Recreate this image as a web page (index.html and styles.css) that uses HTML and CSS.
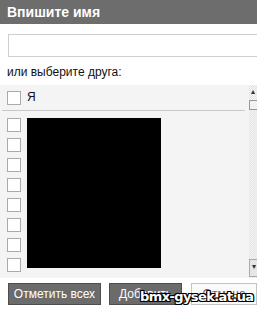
FILE: index.html
```html
<!DOCTYPE html>
<html lang="ru">
<head>
    <meta charset="UTF-8">
    <title>Впишите имя</title>
    <link rel="stylesheet" href="styles.css">
</head>
<body>
    <div class="dialog">
        <div class="title">Впишите имя</div>
        <div class="search">
            <input type="text" class="search-input">
        </div>
        <div class="hint">или выберите друга:</div>
        <div class="list">
            <div class="list-body">
                <div class="me-row">
                    <span class="check"></span>
                    <span class="me-name">Я</span>
                </div>
                <div class="friends">
                    <div class="checks">
                        <span class="check"></span>
                        <span class="check"></span>
                        <span class="check"></span>
                        <span class="check"></span>
                        <span class="check"></span>
                        <span class="check"></span>
                        <span class="check"></span>
                        <span class="check"></span>
                    </div>
                    <div class="names"></div>
                </div>
            </div>
            <div class="scrollbar">
                <div class="arrow">&#9652;</div>
                <div class="thumb"></div>
                <div class="track"></div>
                <div class="arrow arrow-down">&#9662;</div>
            </div>
        </div>
        <div class="buttons">
            <button class="btn btn-all">Отметить всех</button>
            <button class="btn btn-add">Добавить</button>
            <button class="btn btn-cancel">Отмена</button>
        </div>
        <div class="watermark">bmx-gysek.at.ua</div>
    </div>
</body>
</html>
```

FILE: styles.css
```css
body {
    margin: 0;
    background: #fff;
    font-family: "Liberation Sans", Arial, sans-serif;
    font-size: 12px;
    color: #111;
    overflow: hidden;
}
.dialog {
    position: relative;
    width: 257px;
    height: 309px;
    overflow: hidden;
}
.title {
    height: 24px;
    line-height: 24px;
    background-color: #6d6d6d;
    color: #fff;
    font-size: 14px;
    font-weight: bold;
    padding-left: 7px;
}
.search {
    padding: 10px 0 0 8px;
}
.search-input {
    display: block;
    box-sizing: border-box;
    width: 260px;
    height: 23px;
    margin: 0;
    border: 1px solid #cfcfcf;
    background: #fff;
}
.hint {
    padding: 8px 0 0 7px;
    height: 20px;
    line-height: 14px;
}
.list {
    display: flex;
    height: 193px;
    background-color: #f4f4f4;
}
.list-body {
    flex: 1;
}
.me-row {
    display: flex;
    align-items: center;
    gap: 6px;
    height: 25px;
    margin: 0 4px 0 2px;
    padding: 0 0 0 5px;
    border-bottom: 1px solid #c8c8c8;
}
.me-name {
    font-size: 12px;
    margin-top: -2px;
}
.check {
    display: block;
    box-sizing: border-box;
    width: 14px;
    height: 14px;
    border: 1px solid #aaa;
    background: #fff;
}
.friends {
    display: flex;
    gap: 6px;
    padding: 7px 0 0 7px;
}
.checks {
    display: flex;
    flex-direction: column;
    gap: 6px;
}
.names {
    width: 134px;
    height: 150px;
    background: #000;
}
.scrollbar {
    display: flex;
    flex-direction: column;
    width: 8px;
    background-color: #ececec;
    background-image: repeating-conic-gradient(#e2e2e2 0 25%, #f6f6f6 0 50%);
    background-size: 2px 2px;
}
.arrow {
    height: 14px;
    font-size: 8px;
    line-height: 14px;
    color: #333;
    text-align: center;
    overflow: hidden;
}
.thumb {
    height: 8px;
    margin-top: 1px;
    border: 1px solid #999;
    border-right: none;
    background: #f2f2f2;
}
.track {
    flex: 1;
}
.arrow-down {
    height: 16px;
    margin-bottom: 1px;
    border: 1px solid #aaa;
    border-right: none;
    background: #e6e6e6;
}
.buttons {
    display: flex;
    padding: 5px 0 0 8px;
}
.btn {
    box-sizing: border-box;
    height: 22px;
    margin: 0;
    padding: 0;
    font-family: "Liberation Sans", Arial, sans-serif;
    font-size: 12px;
    color: #fff;
    background-color: #6b6b6b;
    border: 1px solid #4e4e4e;
}
.btn-all {
    width: 99px;
}
.btn-add {
    width: 78px;
    margin-left: 8px;
}
.btn-cancel {
    width: 70px;
    margin-left: 9px;
    color: #666;
    background-color: #fafafa;
    border-color: #c4c4c4;
}
.watermark {
    position: absolute;
    left: 140px;
    top: 288px;
    white-space: nowrap;
    font-family: "DejaVu Sans", sans-serif;
    font-size: 13px;
    font-weight: bold;
    line-height: 17px;
    color: #fff;
    letter-spacing: -0.6px;
    text-shadow: 1px 0 0 #000, -1px 0 0 #000, 0 1px 0 #000, 0 -1px 0 #000,
        1px 1px 0 #000, -1px -1px 0 #000, 1px -1px 0 #000, -1px 1px 0 #000;
}
```
